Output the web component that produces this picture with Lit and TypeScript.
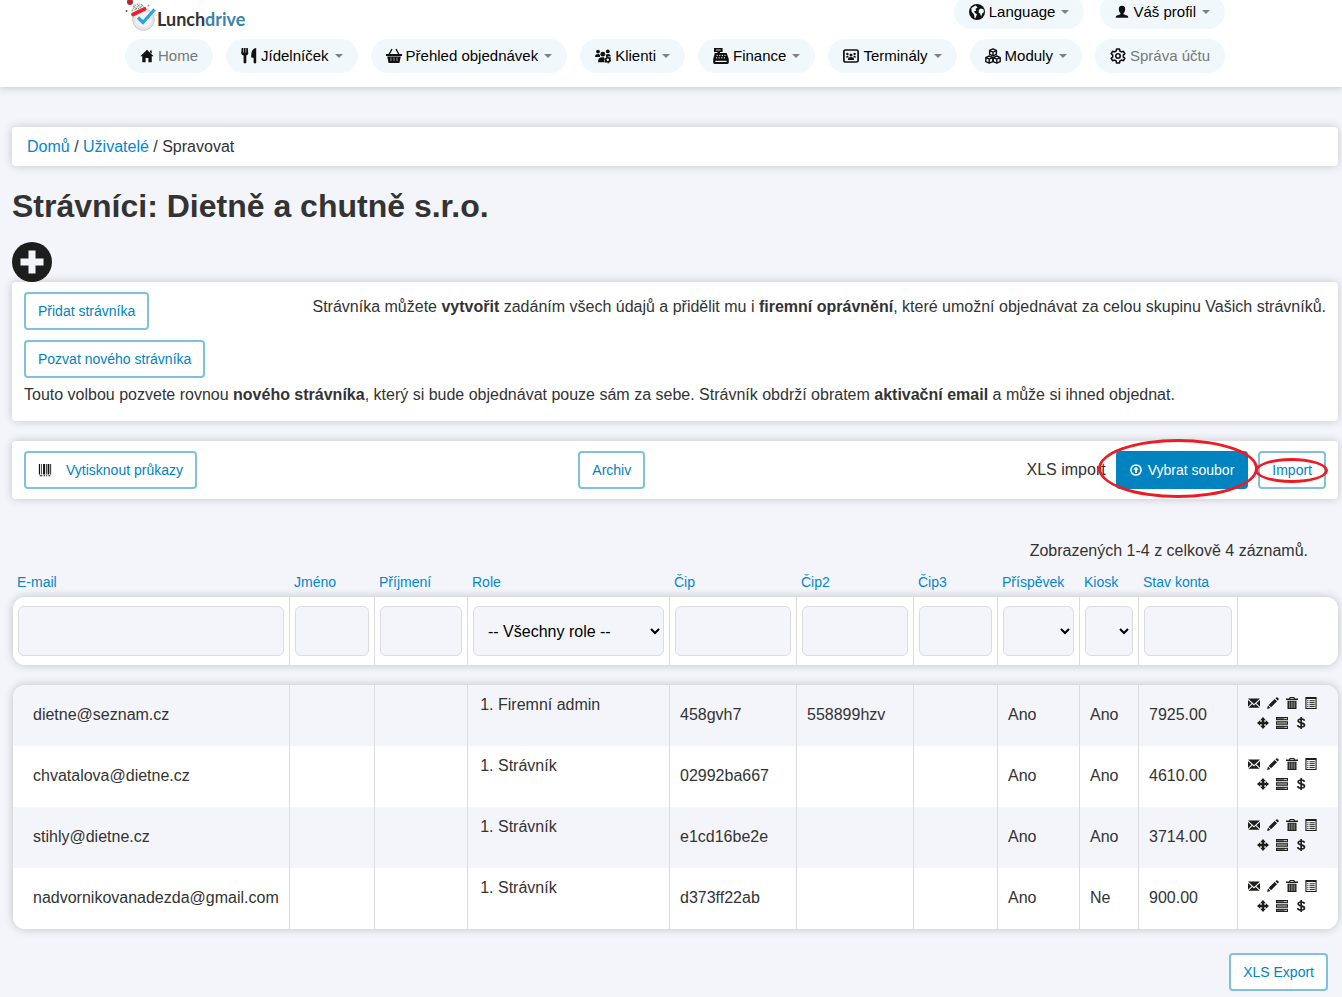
import { LitElement, html, css, svg, nothing } from "lit";
import { customElement } from "lit/decorators.js";

const glyphs: Record<string, unknown> = {
  home: svg`<path d="M8 .8 15.600 8.400H13.400V15H9.600V10.400H6.400V15H2.600V8.400H.4L8 .8Z M11.400 1.600H13.400V5.400L11.400 3.400Z"/>`,
  cutlery: svg`<path d="M.6 0H2.200V4.600H2.800V0H4.600V4.600H5.200V0H6.800L7.300 5.500Q7 7 5.300 7.600V14.800Q4 16.400 2.600 14.800V7.600Q.6 7 .2 5.500Z M15.200 0V14.800Q14.200 16.200 12.600 14.800V9.800H10.400Q9.200 1.200 15.200 0Z"/>`,
  basket: svg`<path d="M0 6H16V8H0Z M1.200 8.500H14.800L13.400 15H2.600Z"/><path d="M3 6.500 6 1M13 6.500 10 1" fill="none" stroke="currentColor" stroke-width="1.400"/><path d="M5 9.500V13M8 9.500V13M11 9.500V13" stroke="#8d9294" stroke-width="1"/>`,
  people: svg`<circle cx="3" cy="3.600" r="1.900"/><circle cx="12.800" cy="3.400" r="1.900"/><circle cx="7.800" cy="6.200" r="2.400"/><path d="M0 9Q0 6 3 6 4.600 6 5 7.200V9Z M10.800 6.800Q14.600 4.800 16 8.200L13 8.400 11 9Z M3 14.200Q3 9.200 7 9.200H9L9.600 14.200Z"/><circle cx="12.800" cy="11.800" r="2" fill="none" stroke="currentColor" stroke-width="1.600"/><circle cx="12.800" cy="11.800" r="3" fill="none" stroke="currentColor" stroke-width="1.200" stroke-dasharray="1.600 1.500"/>`,
  register: svg`<path d="M1 0H9.600V4H7V5H13.600Q14.600 7.600 15.800 11V14.600Q15.800 16 14.400 16H1.600Q.2 16 .2 14.600V11L1.800 5H4.400V4H1Z"/><path d="M3 2H7.600" stroke="#c8cdcf"/><path d="M3.600 7.400H12.800M3 9.800H13.200" stroke="#f0f8fb" stroke-dasharray="1.200 1.400"/><path d="M2.400 13.400H13.600" stroke="#f0f8fb" stroke-width="1.200"/>`,
  terminal: svg`<rect x=".9" y="2" width="14.200" height="12" rx="1.600" fill="none" stroke="currentColor" stroke-width="1.700"/><circle cx="4.400" cy="6" r="1.200"/><circle cx="11.600" cy="6" r="1.200"/><circle cx="8" cy="7" r="1.500"/><path d="M2.800 9.600Q3 7.600 5.200 7.800L5.800 9.600Z M10.200 9.600 10.800 7.800Q13 7.600 13.200 9.600Z M4.800 12Q5 9 8 9T11.200 12Z"/>`,
  cubes: svg`<g fill="none" stroke="currentColor" stroke-width="1.400" stroke-linejoin="round"><path d="M8 .8 11.400 2.400V6.200L8 8 4.600 6.200V2.400ZM4.600 2.600 8 4.200 11.400 2.600M8 4.200V8"/><path d="M4.200 8 7.800 9.600V13.600L4.200 15.200.8 13.600V9.600ZM.8 9.600 4.200 11.200 7.800 9.600M4.200 11.200V15"/><path d="M11.800 8 15.200 9.600V13.600L11.800 15.200 8.200 13.600V9.600ZM8.200 9.600 11.800 11.200 15.200 9.600M11.800 11.200V15"/></g>`,
  gear: svg`<g fill="none" stroke="currentColor" stroke-width="1.600" stroke-linejoin="round"><path d="M6.600 1H9.400L9.900 3 11.400 3.900 13.400 3.300 14.800 5.700 13.300 7.100V8.900L14.800 10.300 13.400 12.700 11.400 12.100 9.900 13 9.400 15H6.600L6.100 13 4.600 12.100 2.600 12.700 1.200 10.300 2.700 8.900V7.100L1.200 5.700 2.600 3.300 4.600 3.900 6.100 3Z"/><circle cx="8" cy="8" r="2.200"/></g>`,
  globe: svg`<circle cx="8" cy="8" r="8"/><path d="M2.400 4 6.600 1.600 8.600 3.400 6.400 5 7.400 6.600 5 7.600 6 9 8 10.200 6.400 14.200 5.600 14 5 10.600 2.600 7.400Z M9.800 6 11.600 4.400 14.400 5.200 15 8 13.200 9.600 12.200 12.600 11 9.600 9.600 8.600Z" fill="#f0f8fb"/>`,
  user: svg`<path d="M8 .8C10.800.8 11.800 2.600 11.600 5 11.400 7.200 10.800 8.400 9.800 9.200V10.600L14.400 12.400Q15.200 13 15.200 14.600H.8Q.8 13 1.600 12.400L6.200 10.600V9.200C5.200 8.400 4.600 7.200 4.400 5 4.200 2.600 5.200.8 8 .8Z"/>`,
  plus: svg`<circle cx="8" cy="8" r="8"/><path d="M6.600 3.400H9.400V6.600H12.600V9.400H9.400V12.600H6.600V9.400H3.400V6.600H6.600Z" fill="#f4f5fa"/>`,
  barcode: svg`<path d="M1 1H2.400V13H1ZM3.600 1H4.400V13H3.600ZM5.800 1H8V13H5.800ZM9 1H10V13H9ZM11 1H13V13H11ZM14 1H15V13H14ZM2 14H5V15H2ZM6.400 14H8V15H6.400ZM9.400 14H10.600V15H9.400ZM12 14H14V15H12Z"/>`,
  upload: svg`<circle cx="8" cy="8" r="6.800" fill="none" stroke="currentColor" stroke-width="2"/><path d="M8 3.600 11.600 7.800H9.300V12H6.700V7.800H4.400Z"/>`,
  mail: svg`<path d="M0 2H16L8 9.200ZM0 4 4.800 8.400 0 13ZM16 4V13L11.200 8.400ZM5.800 9.400 8 11.400 10.200 9.400 15.400 14.400H.6Z"/>`,
  pencil: svg`<path d="M0 16 1.400 11.400 4.600 14.600ZM2.200 10.600 10.200 2.600 13.400 5.800 5.400 13.800ZM11.200 1.800 12.400.6Q13.600-.2 14.800 1.200 16.200 2.400 15.400 3.600L14.200 4.800Z"/>`,
  trash: svg`<path d="M5 0H11L12 2H16V4H0V2H4ZM6 1.200 5.600 2.200H10.400L10 1.200ZM2 5H14V16H2Z" fill-rule="evenodd"/><path d="M4.500 6V14.600M7 6V14.600M9.200 6V14.600M11.600 6V14.600" stroke="#b9bab8" stroke-width=".9"/>`,
  list: svg`<path d="M.5 0H15.500V16H.5ZM2 2.600V14.500H14V2.600Z" fill-rule="evenodd"/><path d="M3 5H4.600M6 5H13M3 7.600H4.600M6 7.600H13M3 10.200H4.600M6 10.200H13M3 12.800H4.600M6 12.800H13" stroke="currentColor" stroke-width="1.300"/>`,
  move: svg`<path d="M8 0 11.800 4.200H9.600V6.400H11.800V4.200L16 8 11.800 11.800V9.600H9.600V11.800H11.800L8 16 4.200 11.800H6.400V9.600H4.200V11.800L0 8 4.200 4.200V6.400H6.400V4.200H4.200Z"/>`,
  tasks: svg`<path d="M0 0H16V4.400H0ZM0 5.800H16V10.200H0ZM0 11.600H16V16H0Z"/><path d="M10 2.200H14.800M1.200 8H14.800M11 13.800H14.800" stroke="#d8d9d8" stroke-width="1.300"/><path d="M1.200 2.200H10M1.200 13.800H11" stroke="#888" stroke-width="1"/>`,
  dollar: svg`<path d="M12.600 4.900Q12 2.600 8.200 2.600 4.400 2.600 4.200 5 4.200 7 8.200 7.800 12.800 8.600 12.700 11 12.400 13.400 8.200 13.400 4 13.400 3.500 10.800M8.200 0V16" fill="none" stroke="currentColor" stroke-width="2.200"/>`,
};

const icon = (name: string, cls = "") =>
  html`<svg class="icon ${cls}" viewBox="0 0 16 16" aria-hidden="true">${glyphs[name]}</svg>`;

interface NavItem { label: string; icon: string; menu?: boolean; muted?: boolean; small?: boolean; }

const topNav: NavItem[] = [
  { label: "Language", icon: "globe", menu: true },
  { label: "Váš profil", icon: "user", menu: true, small: true },
];

const mainNav: NavItem[] = [
  { label: "Home", icon: "home", muted: true, small: true },
  { label: "Jídelníček", icon: "cutlery", menu: true },
  { label: "Přehled objednávek", icon: "basket", menu: true },
  { label: "Klienti", icon: "people", menu: true },
  { label: "Finance", icon: "register", menu: true },
  { label: "Terminály", icon: "terminal", menu: true },
  { label: "Moduly", icon: "cubes", menu: true },
  { label: "Správa účtu", icon: "gear", muted: true },
];

const columns = [
  { key: "email", label: "E-mail", filter: "text" },
  { key: "first", label: "Jméno", filter: "text" },
  { key: "last", label: "Příjmení", filter: "text" },
  { key: "role", label: "Role", filter: "role" },
  { key: "chip", label: "Čip", filter: "text" },
  { key: "chip2", label: "Čip2", filter: "text" },
  { key: "chip3", label: "Čip3", filter: "text" },
  { key: "allowance", label: "Příspěvek", filter: "flag" },
  { key: "kiosk", label: "Kiosk", filter: "flag" },
  { key: "balance", label: "Stav konta", filter: "text" },
];

const diners: Record<string, string>[] = [
  { email: "dietne@seznam.cz", role: "Firemní admin", chip: "458gvh7", chip2: "558899hzv", allowance: "Ano", kiosk: "Ano", balance: "7925.00" },
  { email: "chvatalova@dietne.cz", role: "Strávník", chip: "02992ba667", allowance: "Ano", kiosk: "Ano", balance: "4610.00" },
  { email: "stihly@dietne.cz", role: "Strávník", chip: "e1cd16be2e", allowance: "Ano", kiosk: "Ano", balance: "3714.00" },
  { email: "nadvornikovanadezda@gmail.com", role: "Strávník", chip: "d373ff22ab", allowance: "Ano", kiosk: "Ne", balance: "900.00" },
];

const actions = [
  ["mail", "Poslat e-mail"],
  ["pencil", "Upravit"],
  ["trash", "Smazat"],
  ["list", "Detail"],
  ["move", "Přesunout"],
  ["tasks", "Objednávky"],
  ["dollar", "Platby"],
];

@customElement("app-header")
class AppHeader extends LitElement {
  static styles = css`
    :host { display: block; background: #fff; box-shadow: 0 0 8px rgba(0, 0, 0, 0.25); }
    .inner { max-width: 1100px; margin: 0 auto; padding-bottom: 14px; }
    .wrap { padding: 0 117px 0 125px; }
    .top { display: flex; justify-content: space-between; height: 29px; margin-bottom: 10px; }
    .logo { display: flex; text-decoration: none; color: #333; }
    .mark { width: 36px; height: 32px; flex: none; }
    .word { font: 700 18px/20px Lato, sans-serif; margin: 9px 0 0 -4px; }
    .word span { color: #3d82ab; }
    .links { display: flex; gap: 16px; margin-top: -5px; }
    .main { display: flex; justify-content: space-between; }
    .pill {
      display: flex; align-items: center; gap: 4px; height: 34px; padding: 0 15px;
      border: 0; border-radius: 17px; background: #f0f8fb; color: #000;
      font: 15px/20px "Liberation Sans", Arial, sans-serif; text-decoration: none;
      white-space: nowrap; box-sizing: border-box;
    }
    .pill.muted { color: #777; }
    .icon { width: 16px; height: 16px; fill: currentColor; color: #111; flex: none; }
    .icon.small { width: 14px; height: 14px; }
    .caret {
      border: 4px solid transparent; border-top-color: #808080; border-bottom: 0; margin-left: 2px;
    }
  `;

  pill(item: NavItem) {
    const glyph = icon(item.icon, item.small ? "small" : "");
    return item.menu
      ? html`<button class="pill" type="button" aria-haspopup="true">
          ${glyph}<span>${item.label}</span><span class="caret"></span>
        </button>`
      : html`<a class="pill ${item.muted ? "muted" : ""}" href="#">${glyph}<span>${item.label}</span></a>`;
  }

  render() {
    return html`<header class="wrap">
      <div class="inner">
        <div class="top">
          <a class="logo" href="#">
            <svg class="mark" viewBox="0 0 36 32" aria-hidden="true">
              <circle cx="18.500" cy="19.500" r="10.800" fill="#e6e7ee" stroke="#c6c8cf" />
              <circle cx="18.500" cy="19" r="8" fill="#f3f3f9" />
              <path d="M6.500 12Q6 5 11 3 17 1.500 21 8L19 9Z" fill="#e8e8e8" />
              <path d="M7 11 11 4M10 10 15 4M13 9 18 5M8 6 12 9M12 4 16 8M16 4 20 8" stroke="#666" stroke-width=".9" stroke-dasharray="1 1" />
              <path d="M8 14.500 19.500 9" stroke="#ee2029" stroke-width="3.800" stroke-linecap="round" />
              <circle cx="5" cy="2" r="3" fill="#b5262c" />
              <path d="M13 17.500 18 22.500 29.500 9.500" fill="none" stroke="#26a3e0" stroke-width="3.200" />
              <circle cx="1.500" cy="11" r="1" fill="#555" />
              <circle cx="23.500" cy="5.500" r="1" fill="#999" />
            </svg>
            <div class="word">Lunch<span>drive</span></div>
          </a>
          <div class="links">${topNav.map((i) => this.pill(i))}</div>
        </div>
        <nav class="main">${mainNav.map((i) => this.pill(i))}</nav>
      </div>
    </header>`;
  }
}

@customElement("app-root")
class AppRoot extends LitElement {
  static styles = css`
    :host {
      display: block; min-height: 100vh; background: #f4f5fa; color: #333;
      font: 16px/20px "Liberation Sans", Arial, sans-serif;
    }
    * { box-sizing: border-box; }
    a { color: #0088cc; text-decoration: none; }
    p { margin: 0; }
    main { padding: 40px 4px 6px 12px; }
    .card { background: #fff; border-radius: 4px; box-shadow: 0 0 10px rgba(0, 0, 0, 0.2); }
    .crumbs { padding: 10px 15px 9px; }
    h1 { margin: 20px 0 16px; font-size: 32px; line-height: 40px; }
    .add { display: block; width: 40px; height: 40px; padding: 0; border: 0; background: none; color: #1d1d1b; position: relative; }
    .icon { fill: currentColor; width: 12px; height: 12px; display: block; flex: none; }
    .add .icon { width: 40px; height: 40px; }
    .btn {
      display: inline-flex; align-items: center; height: 38px; padding: 0 12px;
      border: 2px solid #7fc1de; border-radius: 4px; background: #fff; color: #0083be;
      font: 14px/20px "Liberation Sans", Arial, sans-serif; white-space: nowrap;
    }
    .btn.primary { background: #0083be; border-color: #0083be; color: #fff; gap: 6px; }
    .btn .barcode { color: #111; width: 14px; height: 14px; margin-right: 14px; }
    .invite { padding: 10px 12px 16px; }
    .row { display: flex; justify-content: space-between; align-items: flex-start; margin-bottom: 10px; }
    .row p { margin-top: 5px; }
    .invite > p { margin-top: 7px; }
    .tools { display: flex; justify-content: space-between; align-items: center; padding: 10px 12px; margin-top: 20px; }
    .import { display: flex; align-items: center; gap: 10px; }
    .marked { position: relative; display: flex; }
    .ring { position: absolute; border: 3px solid #ed1c24; border-radius: 50%; pointer-events: none; z-index: 1; }
    .ring.large { inset: -12px -10px -9px -18px; }
    .ring.small { inset: 7px -2px 6px -3px; }
    .summary { margin: 42px 30px 6px 0; text-align: right; }
    table { width: calc(100% - 1px); margin-left: 1px; table-layout: fixed; border-collapse: separate; border-spacing: 0; }
    .c-first { width: 85px; } .c-last { width: 93px; } .c-role { width: 202px; }
    .c-chip { width: 127px; } .c-chip2 { width: 117px; } .c-chip3 { width: 84px; }
    .c-allowance { width: 82px; } .c-kiosk { width: 59px; } .c-balance { width: 99px; }
    .c-actions { width: 100px; }
    th { height: 30px; padding: 0 4px; text-align: left; font-size: 14px; font-weight: normal; white-space: nowrap; }
    .filters, .rows { border-radius: 12px; box-shadow: 0 0 10px rgba(0, 0, 0, 0.22); }
    .filters td { background: #fff; height: 68px; padding: 0 5px; }
    td { border-right: 1px solid #dcdcde; }
    td:last-child { border-right: 0; }
    .filters td:first-child { border-radius: 12px 0 0 12px; }
    .filters td:last-child { border-radius: 0 12px 12px 0; }
    input, select {
      display: block; width: 100%; height: 50px; border: 1px solid #dcdcde; border-radius: 6px;
      background: #f4f5fa; color: #000; font: 16px/20px "Liberation Sans", Arial, sans-serif; margin: 0;
    }
    input { padding: 0 14px; }
    select { padding: 0 0 0 10px; }
    .gap td { height: 20px; padding: 0; border: 0; }
    .rows td { height: 61px; padding: 0 10px 2px; background: #fff; }
    .rows tr:nth-child(odd) td { background: #f4f5fa; }
    .rows td:first-child { padding: 0 4px 2px 20px; }
    .rows .role { vertical-align: top; padding: 10px 0; }
    .rows .acts { padding: 0 12px 6px 0; }
    .rows tr:first-child td:first-child { border-top-left-radius: 12px; }
    .rows tr:first-child td:last-child { border-top-right-radius: 12px; }
    .rows tr:last-child td:first-child { border-bottom-left-radius: 12px; }
    .rows tr:last-child td:last-child { border-bottom-right-radius: 12px; }
    ol { margin: 0; padding-left: 30px; }
    .actions { display: flex; flex-wrap: wrap; justify-content: center; column-gap: 7px; row-gap: 8px; padding: 0 4px; }
    .actions a { color: #1d1d1b; }
    .foot { display: flex; justify-content: flex-end; padding: 24px 10px 0 0; }
  `;

  filter(col: { label: string; filter: string }) {
    if (col.filter === "role")
      return html`<select aria-label=${col.label}><option>-- Všechny role --</option></select>`;
    if (col.filter === "flag")
      return html`<select aria-label=${col.label}><option></option><option>Ano</option><option>Ne</option></select>`;
    return html`<input type="text" aria-label=${col.label} />`;
  }

  render() {
    return html`
      <app-header></app-header>
      <main>
        <nav class="card crumbs"><a href="#">Domů</a> / <a href="#">Uživatelé</a> / Spravovat</nav>
        <h1>Strávníci: Dietně a chutně s.r.o.</h1>
        <button class="add" type="button" aria-label="Přidat">${icon("plus")}</button>
        <section class="card invite">
          <div class="row">
            <button class="btn" type="button">Přidat strávníka</button>
            <p>Strávníka můžete <b>vytvořit</b> zadáním všech údajů a přidělit mu i <b>firemní oprávnění</b>, které umožní objednávat za celou skupinu Vašich strávníků.</p>
          </div>
          <button class="btn" type="button">Pozvat nového strávníka</button>
          <p>Touto volbou pozvete rovnou <b>nového strávníka</b>, který si bude objednávat pouze sám za sebe. Strávník obdrží obratem <b>aktivační email</b> a může si ihned objednat.</p>
        </section>
        <section class="card tools">
          <button class="btn" type="button">${icon("barcode", "barcode")}Vytisknout průkazy</button>
          <button class="btn" type="button">Archiv</button>
          <div class="import">
            <span>XLS import</span>
            <div class="marked">
              <button class="btn primary" type="button">${icon("upload")}Vybrat soubor</button>
              <span class="ring large"></span>
            </div>
            <div class="marked">
              <button class="btn" type="button">Import</button>
              <span class="ring small"></span>
            </div>
          </div>
        </section>
        <p class="summary">Zobrazených 1-4 z celkově 4 záznamů.</p>
        <table>
          <colgroup>${columns.map((c) => html`<col class="c-${c.key}" />`)}<col class="c-actions" /></colgroup>
          <thead>
            <tr>${columns.map((c) => html`<th scope="col"><a href="#">${c.label}</a></th>`)}<th></th></tr>
            <tr class="filters">${columns.map((c) => html`<td>${this.filter(c)}</td>`)}<td></td></tr>
            <tr class="gap"><td colspan="11"></td></tr>
          </thead>
          <tbody class="rows">
            ${diners.map((d) => html`<tr>
              ${columns.map((c) => c.key === "role"
                ? html`<td class="role"><ol><li>${d.role}</li></ol></td>`
                : html`<td>${d[c.key] ?? nothing}</td>`)}
              <td class="acts"><div class="actions">
                ${actions.map(([name, label]) => html`<a href="#" aria-label=${label}>${icon(name)}</a>`)}
              </div></td>
            </tr>`)}
          </tbody>
        </table>
        <div class="foot"><button class="btn" type="button">XLS Export</button></div>
      </main>
    `;
  }
}
